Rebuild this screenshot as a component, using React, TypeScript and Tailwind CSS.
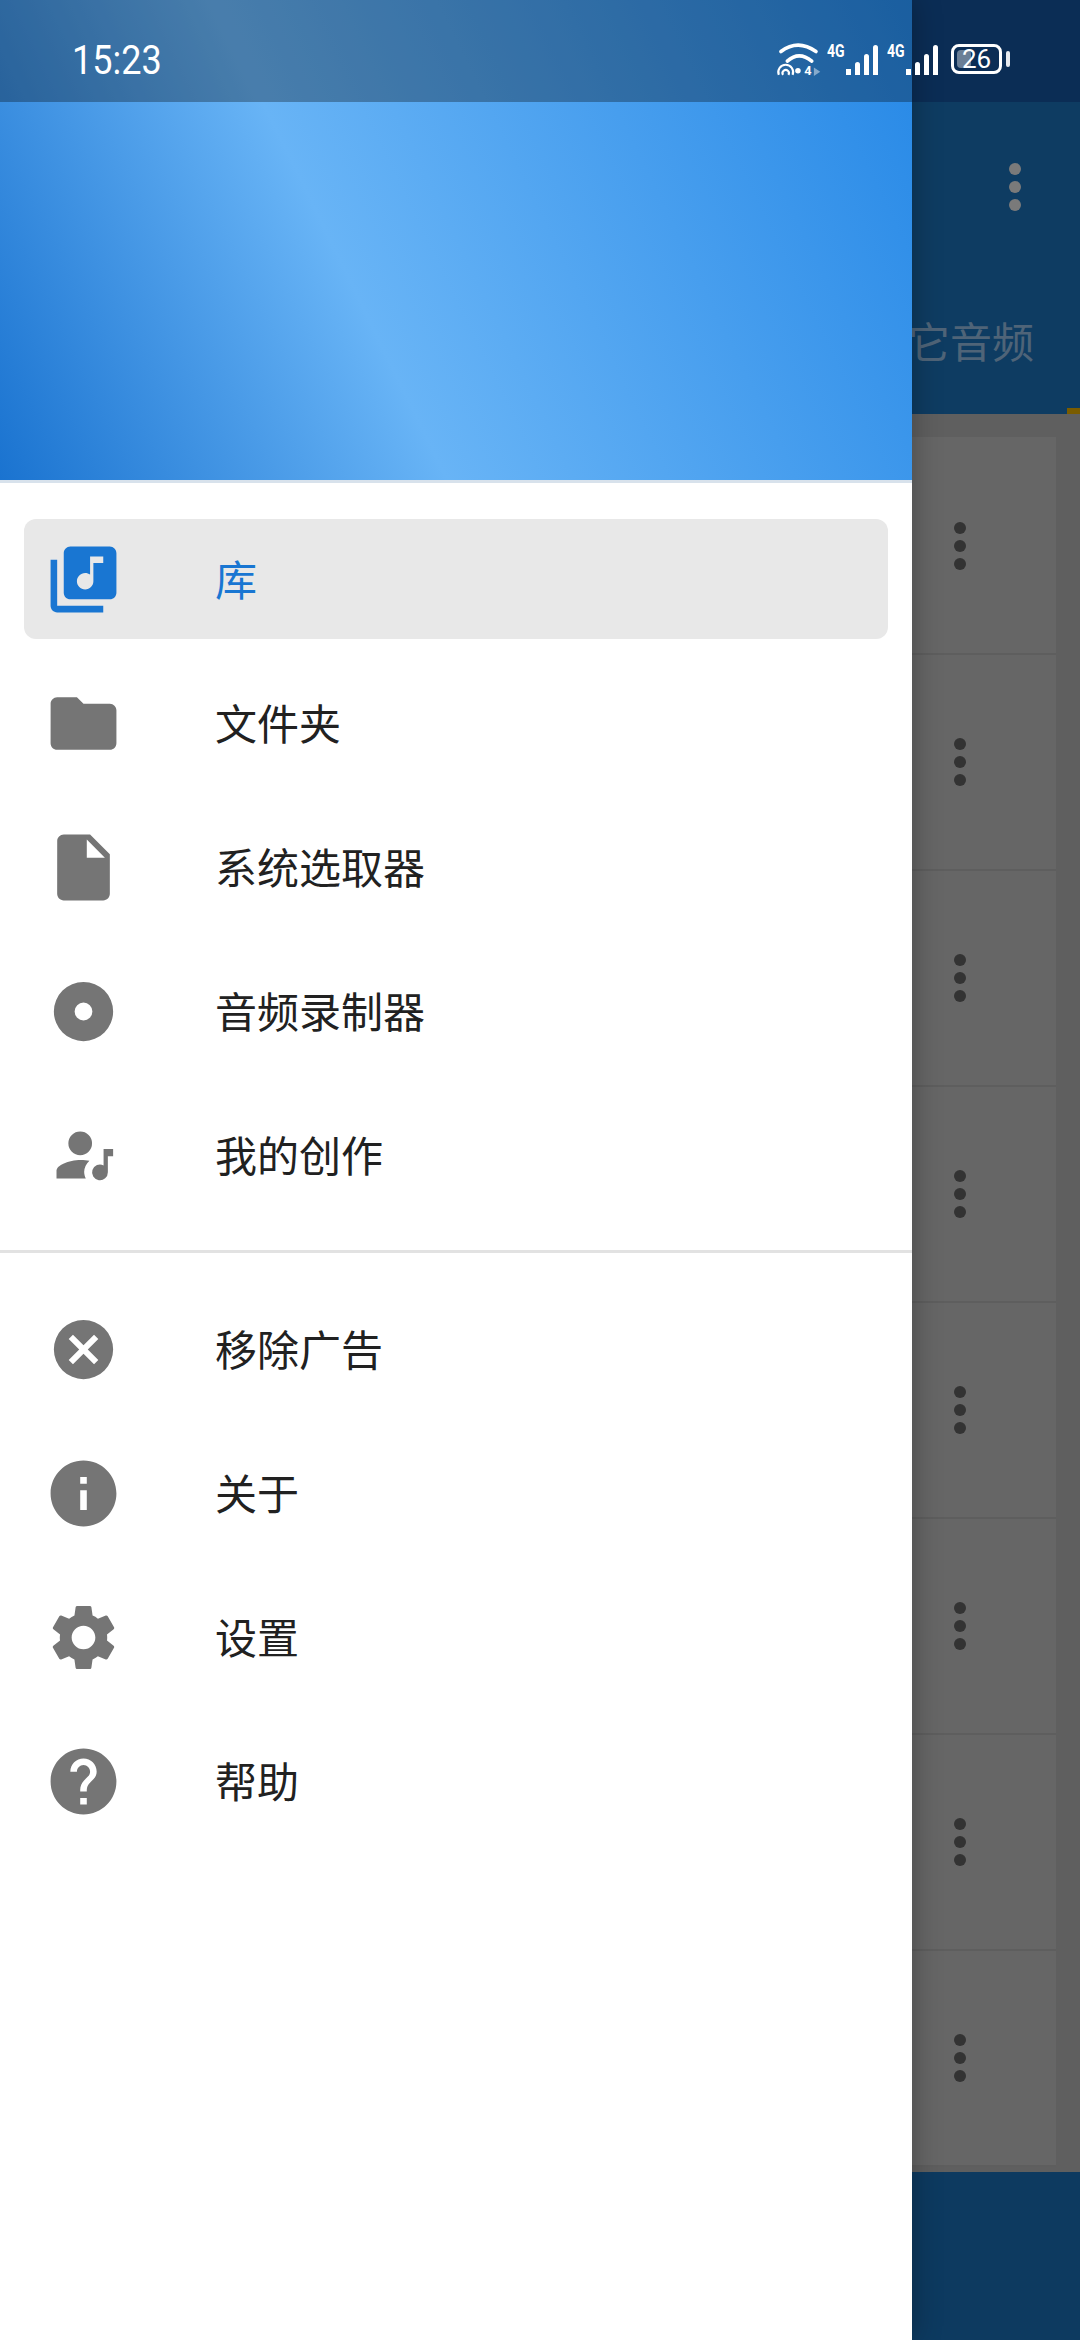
const cjk = "font-['Noto_Sans_CJK_SC','Noto_Sans',sans-serif]";

function MaterialIcon({ d, className }: { d: string; className: string }) {
  return (
    <svg viewBox="0 0 24 24" className={className} fill="currentColor">
      <path d={d} fillRule="evenodd" />
    </svg>
  );
}

const icons = {
  library:
    'M20 2H8c-1.1 0-2 .9-2 2v12c0 1.1.9 2 2 2h12c1.1 0 2-.9 2-2V4c0-1.1-.9-2-2-2zm-2 5h-3v5.5c0 1.38-1.12 2.5-2.5 2.5S10 13.88 10 12.5s1.12-2.5 2.5-2.5c.57 0 1.08.19 1.5.51V5h4v2zM4 6H2v14c0 1.1.9 2 2 2h14v-2H4V6z',
  folder: 'M10 4H4c-1.1 0-1.99.9-1.99 2L2 18c0 1.1.9 2 2 2h16c1.1 0 2-.9 2-2V8c0-1.1-.9-2-2-2h-8l-2-2z',
  file: 'M6 2c-1.1 0-1.99.9-1.99 2L4 20c0 1.1.89 2 1.99 2H18c1.1 0 2-.9 2-2V8l-6-6H6zm7 7V3.5L18.5 9H13z',
  album: 'M12 3a9 9 0 1 0 0 18a9 9 0 1 0 0-18zm0 6.3a2.7 2.7 0 1 1 0 5.4a2.7 2.7 0 1 1 0-5.4z',
  creator:
    'M11 4.7a3.6 3.6 0 1 1 0 7.2a3.6 3.6 0 1 1 0-7.2zM3.8 19v-2.2c0-1.9 3.6-3.3 7.4-3.4c1 0 1.8.1 2.6.2c-1 .9-1.6 2.3-1.6 3.3c0 .7.2 1.4.5 2.1H3.8zM18.1 10H21v2.2h-1.6v4.9a2.4 2.4 0 1 1-1.3-2.1V10z',
  cancel:
    'M12 3a9 9 0 1 0 0 18a9 9 0 1 0 0-18zm4.5 12.2l-1.3 1.3L12 13.3l-3.2 3.2l-1.3-1.3l3.2-3.2l-3.2-3.2l1.3-1.3l3.2 3.2l3.2-3.2l1.3 1.3l-3.2 3.2l3.2 3.2z',
  info: 'M12 2C6.48 2 2 6.48 2 12s4.48 10 10 10 10-4.48 10-10S17.52 2 12 2zm1 15h-2v-6h2v6zm0-8h-2V7h2v2z',
  settings:
    'M19.14 12.94c.04-.3.06-.61.06-.94 0-.32-.02-.64-.07-.94l2.03-1.58c.18-.14.23-.41.12-.61l-1.92-3.32c-.12-.22-.37-.29-.59-.22l-2.39.96c-.5-.38-1.03-.7-1.62-.94l-.36-2.54c-.04-.24-.24-.41-.48-.41h-3.84c-.24 0-.43.17-.47.41l-.36 2.54c-.59.24-1.13.57-1.62.94l-2.39-.96c-.22-.08-.47 0-.59.22L2.74 8.87c-.12.21-.08.47.12.61l2.03 1.58c-.05.3-.09.63-.09.94s.02.64.07.94l-2.03 1.58c-.18.14-.23.41-.12.61l1.92 3.32c.12.22.37.29.59.22l2.39-.96c.5.38 1.03.7 1.62.94l.36 2.54c.05.24.24.41.48.41h3.84c.24 0 .44-.17.47-.41l.36-2.54c.59-.24 1.13-.56 1.62-.94l2.39.96c.22.08.47 0 .59-.22l1.92-3.32c.12-.22.07-.47-.12-.61l-2.01-1.58zM12 15.6c-1.98 0-3.6-1.62-3.6-3.6s1.62-3.6 3.6-3.6 3.6 1.62 3.6 3.6-1.62 3.6-3.6 3.6z',
  help:
    'M12 2C6.48 2 2 6.48 2 12s4.48 10 10 10 10-4.48 10-10S17.52 2 12 2zm1 17h-2v-2h2v2zm2.07-7.75l-.9.92C13.45 12.9 13 13.5 13 15h-2v-.5c0-1.1.45-2.1 1.17-2.83l1.24-1.26c.37-.36.59-.86.59-1.41 0-1.1-.9-2-2-2s-2 .9-2 2H8c0-2.21 1.79-4 4-4s4 1.79 4 4c0 .88-.36 1.68-.93 2.25z',
};

const topItems = [
  { label: '库', icon: icons.library, active: true },
  { label: '文件夹', icon: icons.folder },
  { label: '系统选取器', icon: icons.file },
  { label: '音频录制器', icon: icons.album },
  { label: '我的创作', icon: icons.creator },
];

const bottomItems = [
  { label: '移除广告', icon: icons.cancel },
  { label: '关于', icon: icons.info },
  { label: '设置', icon: icons.settings },
  { label: '帮助', icon: icons.help },
];

function MenuRow({ label, icon, active }: { label: string; icon: string; active?: boolean }) {
  return (
    <div className={`flex h-[120px] items-center rounded-xl pl-5 ${active ? 'bg-[#e8e8e8]' : ''}`}>
      <MaterialIcon d={icon} className={`h-[79px] w-[79px] shrink-0 ${active ? 'text-[#1976d2]' : 'text-[#757575]'}`} />
      <span className={`ml-[92px] pb-[3px] text-[42px] leading-none ${active ? 'text-[#1976d2]' : 'text-[#212121]'}`}>{label}</span>
    </div>
  );
}

function Dots({ className }: { className: string }) {
  return (
    <div className="flex flex-col gap-[6px]">
      <span className={`h-3 w-3 rounded-full ${className}`} />
      <span className={`h-3 w-3 rounded-full ${className}`} />
      <span className={`h-3 w-3 rounded-full ${className}`} />
    </div>
  );
}

function Signal() {
  return (
    <div className="flex h-[32px] items-start">
      <span className="w-[19px] origin-left scale-x-[0.78] font-['Roboto',sans-serif] text-[18px] font-bold leading-[15px] text-white">4G</span>
      <div className="flex h-[30px] items-end gap-[4px] self-end">
        <span className="h-[6px] w-[5px] bg-white" />
        <span className="h-[13px] w-[5px] rounded-t-sm bg-white" />
        <span className="h-[21px] w-[5px] rounded-t-sm bg-white" />
        <span className="h-[30px] w-[5px] rounded-t-sm bg-white" />
      </div>
    </div>
  );
}

function StatusBar() {
  return (
    <div className="absolute left-0 top-0 z-20 flex h-[102px] w-full items-center pl-[72px] pr-[70px] pt-5">
      <span className="origin-left scale-x-[0.9] font-['Roboto',sans-serif] text-[40px] font-normal leading-none text-white">15:23</span>
      <div className="mb-1 ml-auto flex items-center">
        <svg viewBox="0 0 42 32" className="mr-[5px] h-[34px] w-[46px] overflow-visible" fill="none" stroke="white" strokeWidth="3.4">
          <path d="M4 9Q20-3 37 9" strokeLinecap="round" />
          <path d="M10 18Q21 8 33 18" strokeLinecap="round" />
          <path d="M2 31A7 7 0 1 1 15 31" strokeWidth="2" />
          <path d="M6 31A3 3 0 1 1 11 31" strokeWidth="2" />
          <circle cx="20" cy="27" r="2.6" fill="white" stroke="none" />
          <text x="26" y="31" fontSize="12" fontWeight="700" fill="white" stroke="none" fontFamily="Roboto, sans-serif">4</text>
          <polygon points="35,24 41,28 35,32" fill="white" fillOpacity="0.45" stroke="none" />
        </svg>
        <Signal />
        <div className="w-[9px]" />
        <Signal />
        <div className="relative ml-[13px] flex h-[30px] w-[51px] items-center justify-center rounded-lg border-[3px] border-white">
          <span className="absolute bottom-[3px] left-[3px] top-[3px] w-[14px] rounded-sm bg-[#6b7f96]" />
          <span className="relative font-['Roboto',sans-serif] text-[26px] leading-none text-white">26</span>
        </div>
        <span className="ml-[4px] h-[16px] w-[4px] rounded-sm bg-white/90" />
      </div>
    </div>
  );
}

export default function App() {
  const rows = [0, 1, 2, 3, 4, 5, 6, 7];

  return (
    <div className={`relative flex h-[2340px] w-[1080px] overflow-hidden ${cjk}`}>
      <StatusBar />

      {/* DRAWER */}
      <div className="z-10 flex w-[912px] shrink-0 flex-col bg-white shadow-[0_0_28px_rgba(0,0,0,0.3)]">
        <div className="h-[480px] bg-[linear-gradient(64deg,#1a73d0_0%,#68b4f6_39%,#2688e6_100%)]">
          <div className="h-[102px] bg-black/30" />
        </div>
        <div className="h-[3px] bg-[#d8e2ec]" />

        <div className="flex flex-col gap-6 px-6 pb-[35px] pt-9">
          {topItems.map((item) => (
            <MenuRow key={item.label} {...item} />
          ))}
        </div>

        <div className="h-[3px] bg-[#e2e2e2]" />

        <div className="flex flex-col gap-6 px-6 pt-9">
          {bottomItems.map((item) => (
            <MenuRow key={item.label} {...item} />
          ))}
        </div>
      </div>

      {/* APP BEHIND THE SCRIM */}
      <div className="flex min-w-0 flex-1 flex-col bg-[#5f5f5f]">
        <div className="h-[102px] bg-[#0b2d55]" />
        <div className="relative h-[312px] overflow-hidden bg-[#0e3c62]">
          <div className="absolute right-[59px] top-[61px]">
            <Dots className="bg-[#7a7a7a]" />
          </div>
          <span className="absolute left-[-46px] top-[214px] whitespace-nowrap text-[42px] leading-[48px] text-[#4f6478]">
            其它音频
          </span>
          <span className="absolute bottom-0 right-0 h-[6px] w-[13px] bg-[#7a5c00]" />
        </div>

        <div className="flex flex-1 flex-col pr-6 pt-[23px]">
          <div className="h-[2px] bg-[#666666]" />
          {rows.map((row) => (
            <div key={row} className="flex h-[216px] shrink-0 items-center border-b-2 border-[#5e5e5e] bg-[#666666] pl-[42px]">
              <Dots className="bg-[#333333]" />
            </div>
          ))}
        </div>

        <div className="h-[168px] bg-[#0d3a60]" />
      </div>
    </div>
  );
}
